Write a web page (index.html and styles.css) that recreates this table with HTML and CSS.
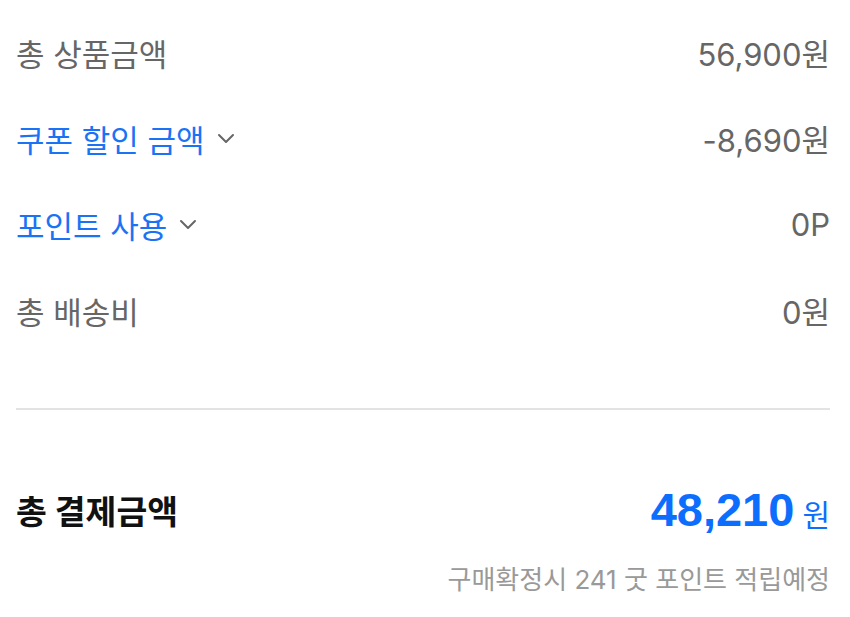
FILE: index.html
```html
<!DOCTYPE html>
<html lang="ko">
<head>
<meta charset="utf-8">
<link rel="stylesheet" href="styles.css">
</head>
<body>
<div class="summary">
  <div class="rows">
    <div class="row">
      <span class="label">총 상품금액</span>
      <span class="value">56,900원</span>
    </div>
    <div class="row">
      <span class="label link">쿠폰 할인 금액 <svg class="chev" viewBox="0 0 18 12" width="18" height="12"><path d="M2 2 L9 9 L16 2" fill="none" stroke="#666" stroke-width="2" stroke-linecap="round" stroke-linejoin="round"/></svg></span>
      <span class="value">-8,690원</span>
    </div>
    <div class="row">
      <span class="label link">포인트 사용 <svg class="chev" viewBox="0 0 18 12" width="18" height="12"><path d="M2 2 L9 9 L16 2" fill="none" stroke="#666" stroke-width="2" stroke-linecap="round" stroke-linejoin="round"/></svg></span>
      <span class="value">0P</span>
    </div>
    <div class="row">
      <span class="label">총 배송비</span>
      <span class="value">0원</span>
    </div>
  </div>
  <div class="divider"></div>
  <div class="total">
    <span class="total-label">총 결제금액</span>
    <span class="total-value"><span class="amount">48,210</span><span class="unit">원</span></span>
  </div>
  <div class="note">구매확정시 241 굿 포인트 적립예정</div>
</div>
</body>
</html>
```
FILE: styles.css
```css
html, body {
  margin: 0;
  padding: 0;
  background: #fff;
}
body {
  font-family: "Inter", "Noto Sans CJK KR", sans-serif;
}
.summary {
  padding: 9px 20px 0 16px;
}
.row {
  height: 86px;
  display: flex;
  align-items: center;
  justify-content: space-between;
  font-size: 31px;
  color: #666;
}
.label {
  display: flex;
  align-items: center;
}
.link {
  color: #1a73f5;
}
.chev {
  margin-left: 12px;
  margin-top: 2px;
}
.divider {
  height: 2px;
  background: #e3e3e3;
  margin-top: 55px;
}
.total {
  display: flex;
  justify-content: space-between;
  align-items: center;
  margin-top: 64px;
  height: 70px;
}
.total-label {
  font-size: 33.5px;
  font-weight: 700;
  color: #111;
}
.total-value {
  display: flex;
  align-items: baseline;
  color: #0d6efd;
}
.amount {
  font-family: "Liberation Sans", sans-serif;
  font-size: 47px;
  font-weight: 700;
}
.unit {
  font-size: 30px;
  margin-left: 8px;
}
.note {
  text-align: right;
  font-size: 26px;
  color: #999;
  margin-top: 15px;
}
```
